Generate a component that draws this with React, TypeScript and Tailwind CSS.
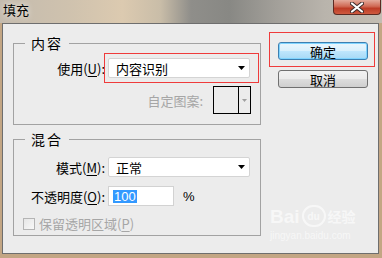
import { ReactNode } from "react";

const cjk = "font-['Noto_Sans_CJK_SC','Noto_Sans',sans-serif]";
const latin = "font-['Liberation_Sans',Arial,sans-serif]";

function Caret({ color = "#000" }: { color?: string }) {
  return (
    <svg width="7" height="4" viewBox="0 0 7 4">
      <path d="M0 0h7L3.5 4z" fill={color} />
    </svg>
  );
}

function Group({ title, className, children }: { title: string; className: string; children: ReactNode }) {
  return (
    <div className={`relative border border-[#a2a2a2] ${className}`}>
      <span className="absolute left-[11px] -top-[9px] bg-[#ececec] px-[6px] text-[14px] leading-[16px] tracking-[2px]">
        {title}
      </span>
      {children}
    </div>
  );
}

function Select({ value, children }: { value: string; children?: ReactNode }) {
  return (
    <div className="relative ml-[3px] flex h-[20px] w-[142px] items-center justify-between rounded-[2px] border border-[#d4d4d4] bg-white pl-[7px] pr-[4px]">
      <span className="text-[13px] leading-none">{value}</span>
      <Caret />
      {children}
    </div>
  );
}

function Label({ text, k }: { text: string; k: string }) {
  return (
    <span className="w-[91px] text-right text-[13px] leading-none">
      {text}(<span className="underline underline-offset-2">{k}</span>):
    </span>
  );
}

export default function App() {
  return (
    <div className={`flex h-[258px] w-[382px] flex-col overflow-hidden bg-[#c3a684] text-black ${cjk}`}>
      {/* title bar */}
      <div className="flex h-[23px] items-start justify-between bg-[linear-gradient(90deg,#c4bbae_0%,#cfc2ae_18%,#dccab0_32%,#c9bda8_42%,#8f8e8a_50%,#888884_60%,#a29f99_72%,#b9b4ac_85%,#c3bdb3_100%)]">
        <span className="pl-[3px] pt-[3px] text-[13px] leading-[14px] [text-shadow:0_0_6px_#fff]">填充</span>
        <div className="mr-[1px] flex h-[15px] w-[48px] items-center justify-center rounded-b-[4px] border border-t-0 border-[#5c2a22] bg-[linear-gradient(180deg,#e4aa9b_0%,#d06a55_45%,#bd3c26_60%,#cf5a3f_100%)]">
          <svg width="14" height="11" viewBox="0 0 14 11">
            <path d="M2 1.5l10 8M12 1.5l-10 8" stroke="#3a2a2a" strokeWidth="4" strokeLinecap="round" />
            <path d="M2 1.5l10 8M12 1.5l-10 8" stroke="#fff" strokeWidth="2.2" strokeLinecap="round" />
          </svg>
        </div>
      </div>

      {/* client area */}
      <div className="mb-[4px] ml-[2px] mr-[3px] flex flex-1 border border-[#6e6e6e] bg-[#ececec] pl-[10px]">
        <div className="relative flex flex-1">
          <div className="flex w-[248px] flex-col">
            <Group title="内容" className="mt-[19px] h-[82px]">
              <div className="flex items-center pt-[14px]">
                <Label text="使用" k="U" />
                <Select value="内容识别">
                  <span className="absolute -left-[5px] -top-[6px] h-[30px] w-[155px] border border-[#ef3b3b]" />
                </Select>
              </div>
              <div className="mt-[8px] flex items-center justify-end pr-[9px]">
                <span className="mr-[10px] text-[13px] leading-none text-[#a6a6a6]">自定图案:</span>
                <div className="flex h-[28px] w-[38px] border border-black bg-[#ececec]">
                  <div className="flex-1 border-r border-black" />
                  <div className="flex w-[11px] items-center justify-center">
                    <svg width="5" height="3" viewBox="0 0 5 3">
                      <path d="M0 0h5L2.5 3z" fill="#a0a0a0" />
                    </svg>
                  </div>
                </div>
              </div>
            </Group>

            <Group title="混合" className="mt-[14px] h-[97px]">
              <div className="flex items-center pt-[17px]">
                <Label text="模式" k="M" />
                <Select value="正常" />
              </div>
              <div className="mt-[9px] flex items-center">
                <Label text="不透明度" k="O" />
                <div className="ml-[3px] flex h-[20px] w-[66px] items-center border border-[#d2d2d2] bg-white pl-[4px]">
                  <span className={`bg-[#3399ff] px-[1px] text-[13px] leading-[13px] text-white ${latin}`}>100</span>
                </div>
                <span className={`ml-[9px] text-[13px] leading-none ${latin}`}>%</span>
              </div>
              <div className="ml-[9px] mt-[11px] flex items-center">
                <span className="h-[12px] w-[12px] border border-[#b4b4b4] bg-[linear-gradient(135deg,#e6e6e6,#f8f8f8)]" />
                <span className="ml-[4px] text-[13px] leading-none text-[#a6a6a6]">
                  保留透明区域(<span className="underline underline-offset-2">P</span>)
                </span>
              </div>
            </Group>
          </div>

          <div className="ml-[17px] mt-[18px] flex flex-col">
            <div className="relative">
              <button className="flex h-[18px] w-[90px] items-center justify-center rounded-[3px] border border-[#3c7fb1] bg-[linear-gradient(180deg,#eaf6fd_0%,#d9f0fc_48%,#bee6fd_52%,#a7d9f5_100%)] text-[13px] leading-none shadow-[0_0_0_1px_#7fd4ff_inset]">
                确定
              </button>
              <span className="absolute -left-[9px] -top-[10px] h-[35px] w-[106px] border border-[#ef3b3b]" />
            </div>
            <button className="mt-[10px] flex h-[18px] w-[90px] items-center justify-center rounded-[3px] border border-[#707070] bg-[linear-gradient(180deg,#f2f2f2_0%,#ebebeb_48%,#dddddd_52%,#cfcfcf_100%)] text-[13px] leading-none">
              取消
            </button>
          </div>

          {/* watermark */}
          <div className="pointer-events-none absolute left-[257px] top-[181px] flex flex-col text-white/60">
            <div className="flex items-center">
              <span className={`text-[19px] font-bold leading-none ${latin}`}>Bai</span>
              <span className="mx-[2px] flex h-[22px] w-[24px] items-center justify-center rounded-full border-2 border-white/60 text-[10px] font-bold leading-none">du</span>
              <span className="text-[14px] font-bold leading-none">经验</span>
            </div>
            <span className={`mt-[4px] text-[10px] leading-none ${latin}`}>jingyan.baidu.com</span>
          </div>
        </div>
      </div>
    </div>
  );
}
